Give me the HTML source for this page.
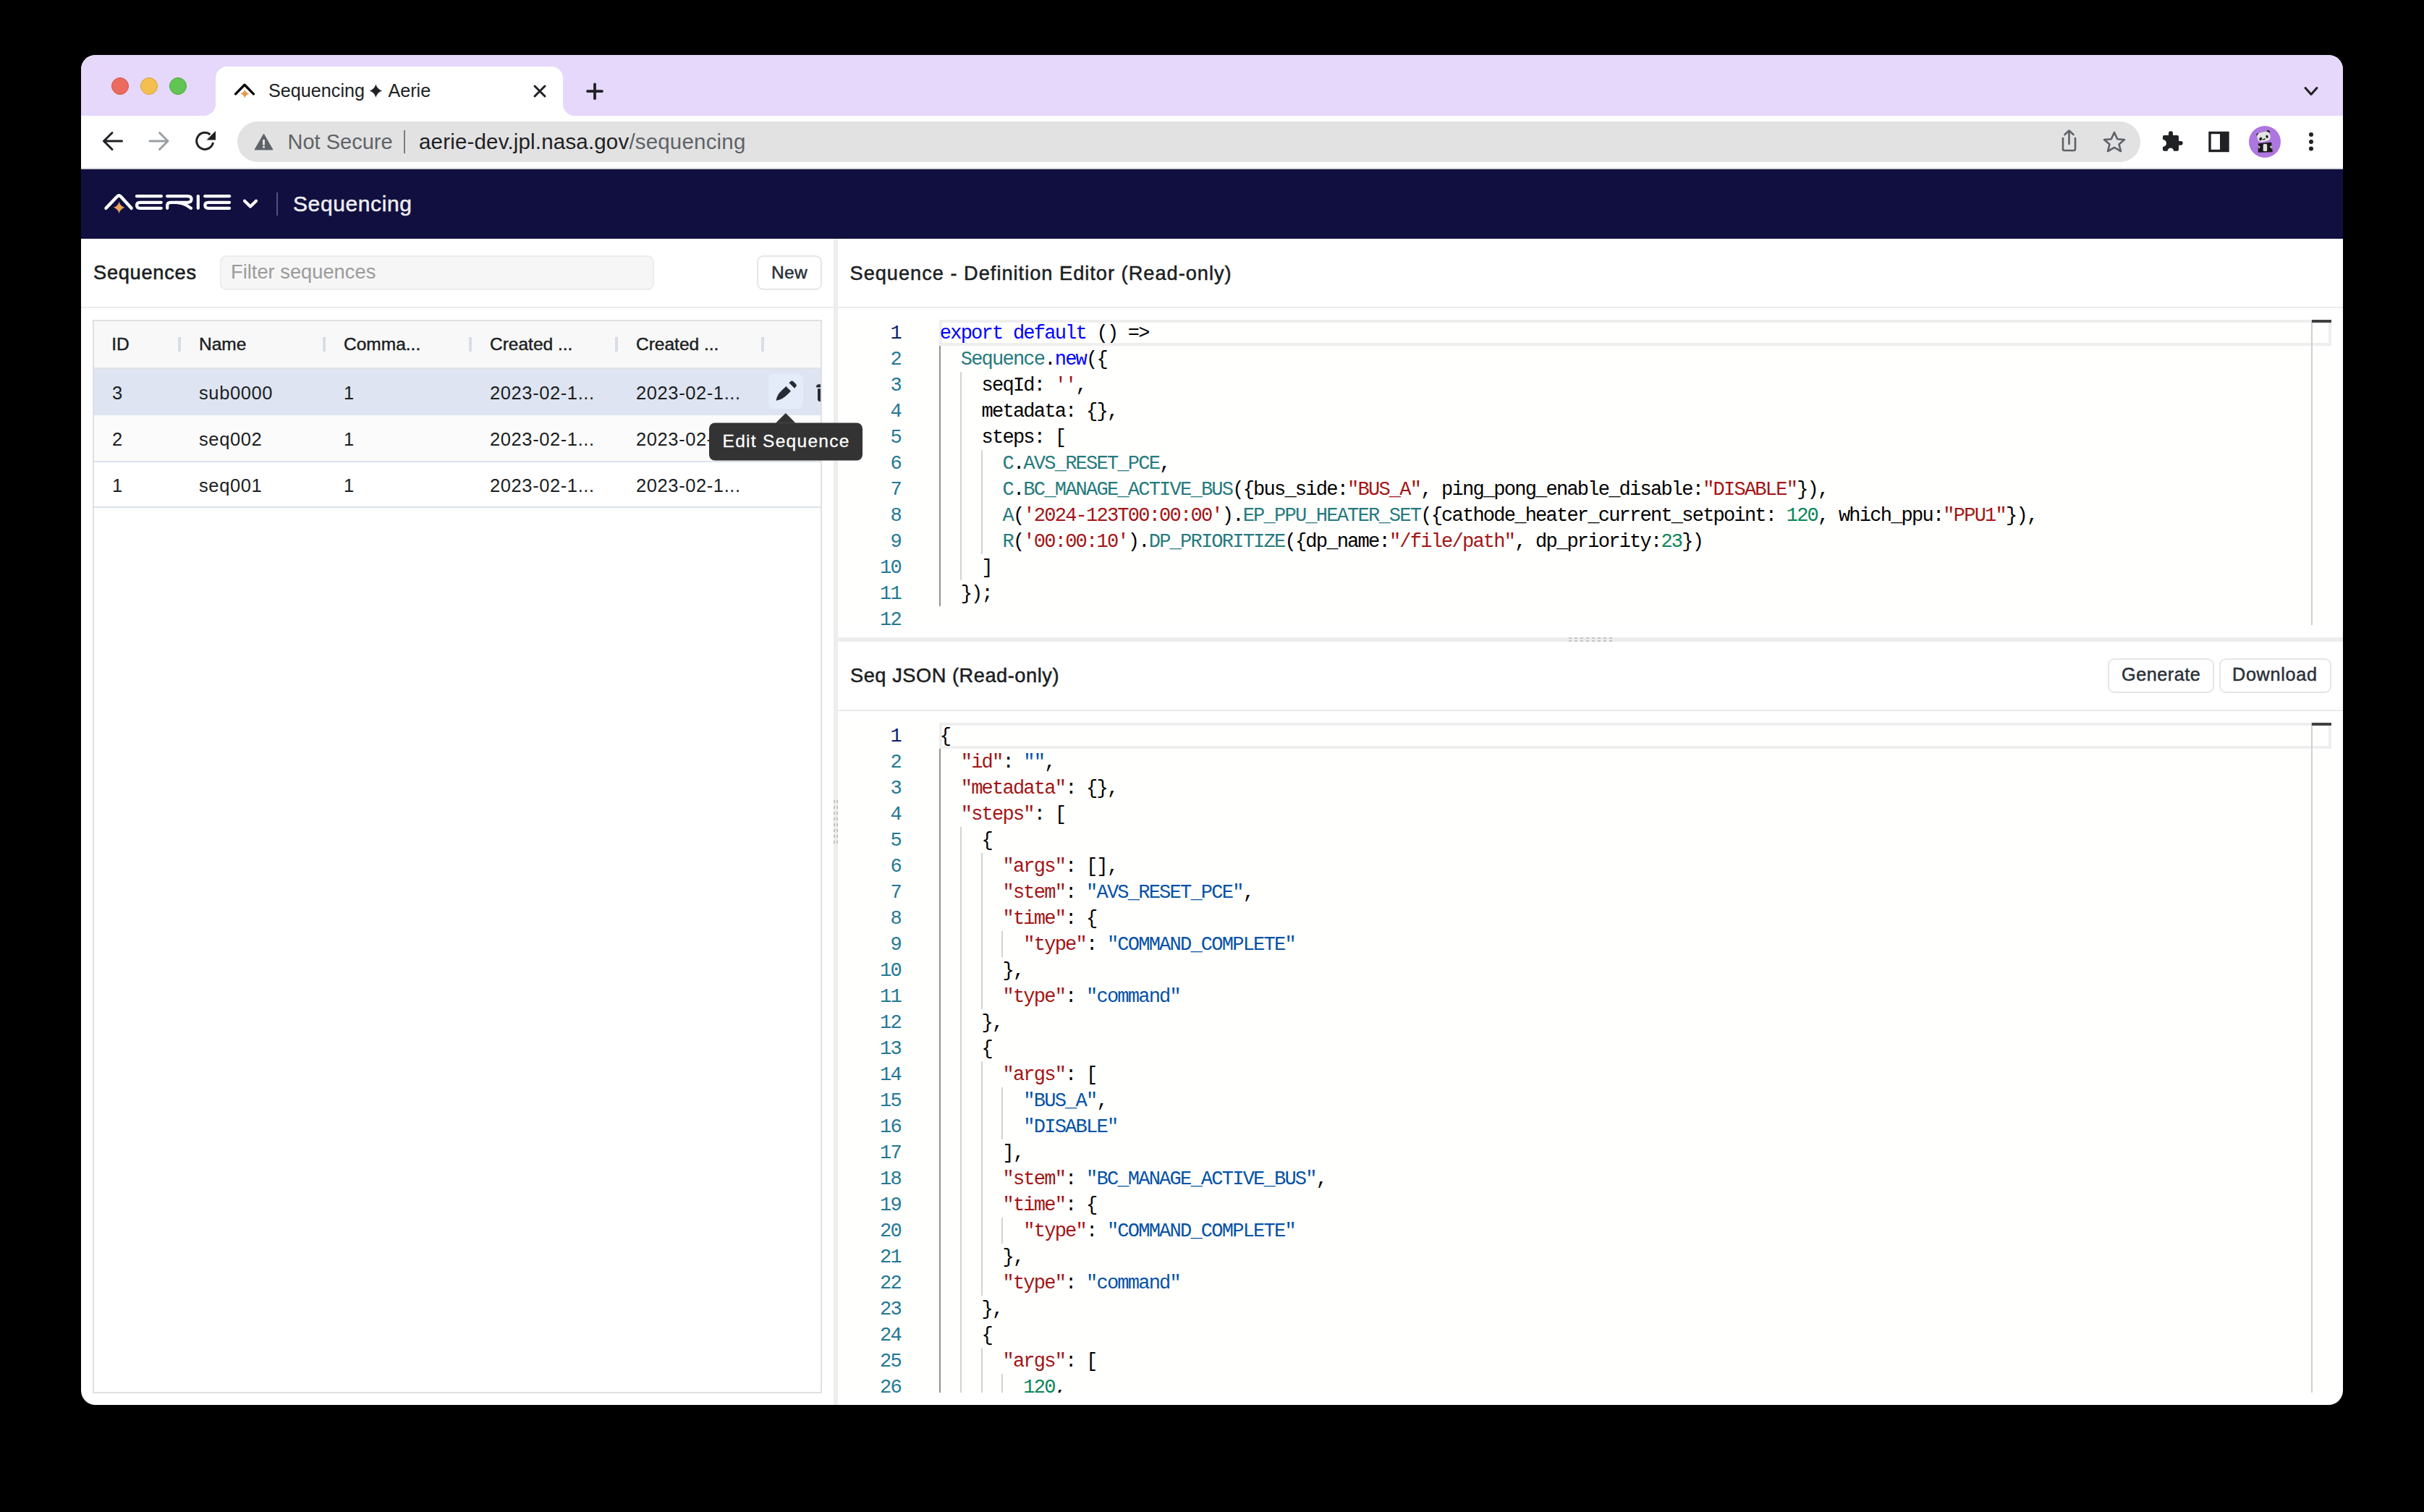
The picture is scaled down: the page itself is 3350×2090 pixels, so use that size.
<!DOCTYPE html>
<html><head><meta charset="utf-8">
<style>
*{box-sizing:border-box;margin:0;padding:0}
html,body{width:3350px;height:2090px;background:#000;overflow:hidden}
body{position:relative;font-family:"Liberation Sans",sans-serif}
.a{position:absolute}
.t{position:absolute;white-space:pre;line-height:1}
.tl{position:absolute;width:24px;height:24px;border-radius:50%}
.cl{position:absolute;white-space:pre;font-family:"Liberation Mono",monospace;font-size:27px;letter-spacing:-1.76px;line-height:36px;height:36px;color:#000}
.ln{position:absolute;white-space:pre;font-family:"Liberation Mono",monospace;font-size:27px;letter-spacing:-1.76px;line-height:36px;height:36px;color:#237893;text-align:right}
.k{color:#0000FF}.ty{color:#267A7C}.s{color:#A31515}.n{color:#098658}.v{color:#0451A5}
</style></head><body>
<div class="a" style="left:112px;top:76px;width:3126px;height:1866px;border-radius:20px;overflow:hidden;background:#fff"><div class="a" style="left:0;top:0;width:3126px;height:84px;background:#E5D8FA"></div></div>
<div class="tl" style="left:154px;top:107px;background:#EC6A5E;border:1px solid #D0574B"></div>
<div class="tl" style="left:194px;top:107px;background:#F4BF4F;border:1px solid #D6A33E"></div>
<div class="tl" style="left:234px;top:107px;background:#61C554;border:1px solid #4EA73F"></div>
<svg class="a" style="left:0;top:0" width="3350" height="240">
<path d="M282,160 A16,16 0 0 0 298,144 L298,108 A16,16 0 0 1 314,92 L762,92 A16,16 0 0 1 778,108 L778,144 A16,16 0 0 0 794,160 Z" fill="#fff"/>
<!-- favicon -->
<path d="M325.6,129.9 L338,117.2 L350.4,129.9" fill="none" stroke="#000" stroke-width="3.4" stroke-linecap="round" stroke-linejoin="round"/>
<path d="M338.3,123.5 Q339.7,128.1 344.3,129.5 Q339.7,130.9 338.3,135.5 Q336.90000000000003,130.9 332.3,129.5 Q336.90000000000003,128.1 338.3,123.5 Z" fill="#E39A50"/>
<!-- tab star glyph -->
<path d="M519.4,116.8 Q521.6,123.39999999999999 528.1,125.6 Q521.6,127.8 519.4,134.4 Q517.1999999999999,127.8 510.7,125.6 Q517.1999999999999,123.39999999999999 519.4,116.8 Z" fill="#202124"/>
<!-- close x -->
<path d="M739,119 L753,133 M753,119 L739,133" stroke="#202124" stroke-width="3" stroke-linecap="round"/>
<!-- plus -->
<path d="M822,116.4 L822,136.2 M812,126.1 L832,126.1" stroke="#202124" stroke-width="3.8" stroke-linecap="round"/>
<!-- tab strip chevron -->
<path d="M3186,121.5 L3194,130.5 L3202,121.5" fill="none" stroke="#202124" stroke-width="3" stroke-linecap="round" stroke-linejoin="round"/>
<!-- toolbar -->
<rect x="112" y="160" width="3126" height="72" fill="#fff"/>
<rect x="112" y="232" width="3126" height="2" fill="#D5D5D5"/>
<rect x="328" y="168" width="2630" height="56" rx="28" fill="#E2E2E2"/>
<!-- back arrow -->
<path d="M143.5,195 L168.5,195 M155,183.5 L143.5,195 L155,206.5" fill="none" stroke="#202124" stroke-width="3" stroke-linecap="round" stroke-linejoin="round"/>
<!-- forward arrow -->
<path d="M232,195 L207,195 M220.5,183.5 L232,195 L220.5,206.5" fill="none" stroke="#9AA0A6" stroke-width="3" stroke-linecap="round" stroke-linejoin="round"/>
<!-- reload -->
<path d="M294.5,197 A11.5,11.5 0 1 1 290.5,186" fill="none" stroke="#202124" stroke-width="3"/>
<path d="M298,181 L298,193.5 L285.5,193.5 Z" fill="#202124"/>
<!-- warning triangle -->
<path d="M364.5,185.2 L377,206.9 L352,206.9 Z" fill="#5F6368" stroke="#5F6368" stroke-width="1" stroke-linejoin="round"/>
<rect x="363" y="193" width="3" height="7.5" fill="#E2E2E2"/>
<rect x="363" y="201.8" width="3" height="2.6" fill="#E2E2E2"/>
<!-- separator -->
<rect x="558" y="180" width="2" height="32" fill="#7A7D82"/>
<!-- share icon -->
<path d="M2851,190 L2851,206 Q2851,208 2853,208 L2866,208 Q2868,208 2868,206 L2868,190" fill="none" stroke="#5F6368" stroke-width="2.6" stroke-linejoin="round"/>
<path d="M2859.5,199 L2859.5,180.5 M2853.5,186 L2859.5,180.5 L2865.5,186" fill="none" stroke="#5F6368" stroke-width="2.6" stroke-linecap="round" stroke-linejoin="round"/>
<!-- star icon -->
<path d="M2922,183 L2926.2,192.2 L2936,193.1 L2928.5,199.4 L2931,209 L2922,203.8 L2913,209 L2915.5,199.4 L2908,193.1 L2917.8,192.2 Z" fill="none" stroke="#5F6368" stroke-width="2.6" stroke-linejoin="round"/>
<!-- puzzle -->
<path d="M2991,187 L2997,187 L2997,184.2 A3,3 0 0 1 3003,184.2 L3003,187 L3009,187 A2,2 0 0 1 3011,189 L3011,195 L3013.8,195 A2.85,2.85 0 0 1 3013.8,200.7 L3011,200.7 L3011,206.8 A2,2 0 0 1 3009,208.8 L3004,208.8 A4.2,4.2 0 0 0 2995.6,208.8 L2991,208.8 A2,2 0 0 1 2989,206.8 L2989,203 A5,5 0 0 0 2989,193 L2989,189 A2,2 0 0 1 2991,187 Z" fill="#202124"/>
<!-- sidebar icon -->
<rect x="3054" y="183.5" width="25" height="25" fill="none" stroke="#202124" stroke-width="3.4"/>
<rect x="3068" y="183.5" width="11" height="25" fill="#202124"/>
<!-- avatar -->
<circle cx="3130" cy="196" r="22" fill="#AD77E0"/>
<circle cx="3120.8" cy="186.2" r="2.3" fill="#151515"/>
<circle cx="3134.6" cy="182.4" r="2.3" fill="#151515"/>
<path d="M3121.5,199 L3138.5,197.5 L3140,209.5 L3121.5,210 Z" fill="#1A1A1A" stroke="#1A1A1A" stroke-width="1.5" stroke-linejoin="round"/>
<rect x="3127.7" y="199" width="5.5" height="10" rx="1.5" fill="#E0E0E0"/>
<path d="M3120.5,200.5 L3123.5,203 L3122,206 Z" fill="#D8D8D8"/>
<path d="M3139.5,200.5 L3136.8,203 L3139.8,206 Z" fill="#D8D8D8"/>
<g transform="rotate(-12 3128.5 189)"><rect x="3119.5" y="182.5" width="18" height="13" rx="5" fill="#E2E2E2"/></g>
<ellipse cx="3124.2" cy="192" rx="1.8" ry="2.4" fill="#151515" transform="rotate(25 3124.2 192)"/>
<ellipse cx="3133" cy="188.8" rx="1.6" ry="2.1" fill="#151515" transform="rotate(-25 3133 188.8)"/>
<path d="M3126.5,192.5 Q3128.5,193.5 3130.5,191.5" fill="none" stroke="#151515" stroke-width="1.2"/>
<!-- kebab -->
<circle cx="3194" cy="186" r="3" fill="#202124"/>
<circle cx="3194" cy="196" r="3" fill="#202124"/>
<circle cx="3194" cy="205.5" r="3" fill="#202124"/>
</svg>
<div class="t" style="left:371px;top:112.77px;font-size:25.2px;color:#202124;">Sequencing</div>
<div class="t" style="left:536.4px;top:112.77px;font-size:25.2px;color:#202124;">Aerie</div>
<div class="t" style="left:397.5px;top:181.55px;font-size:29px;color:#5F6368;">Not Secure</div>
<div class="t" style="left:579px;top:181.13px;font-size:29.5px;color:#202124;letter-spacing:0.18px;">aerie-dev.jpl.nasa.gov<span style="color:#5F6368">/sequencing</span></div>
<div class="a" style="left:112px;top:234px;width:3126px;height:96px;background:#110F3F"></div>
<svg class="a" style="left:0;top:0" width="600" height="340">
<path d="M146.5,287.8 L162,271.5 Q164.4,269.3 166.8,271.5 L181.6,287.8" fill="none" stroke="#fff" stroke-width="4.4" stroke-linecap="round" stroke-linejoin="round"/>
<path d="M164.6,278.7 Q166.29999999999998,285.1 172.5,286.8 Q166.29999999999998,288.5 164.6,294.90000000000003 Q162.9,288.5 156.7,286.8 Q162.9,285.1 164.6,278.7 Z" fill="#E9A25A"/>
<g fill="none" stroke="#fff" stroke-width="4.2" stroke-linecap="round" stroke-linejoin="round">
<path d="M189,271.2 L222.8,271.2"/>
<path d="M222.8,279.8 L193.5,279.8 Q189,279.8 189,283.8 Q189,287.8 193.5,287.8 L222.8,287.8"/>
<path d="M231.2,271.2 L259,271.2 Q264.5,271.2 264.5,275.5 Q264.5,279.8 259,279.8 L236,279.8 Q231.2,279.8 231.2,284 L231.2,287.8"/>
<path d="M244,279.8 Q255,280.5 264,287.8"/>
<path d="M273.8,271.2 L273.8,287.8"/>
<path d="M283.3,271.2 L317.1,271.2"/>
<path d="M317.1,279.8 L287.8,279.8 Q283.3,279.8 283.3,283.8 Q283.3,287.8 287.8,287.8 L317.1,287.8"/>
<path d="M338,277.8 L346,285.6 L354,277.8"/>
</g>
<rect x="382" y="266" width="2" height="32" fill="#51507A"/>
</svg>
<div class="t" style="left:405px;top:266.60px;font-size:30px;color:#EEEEF2;letter-spacing:0.6px;-webkit-text-stroke:0.5px #EEEEF2;">Sequencing</div>
<div class="a" style="left:112px;top:424px;width:1040px;height:2px;background:#EBEBEB"></div>
<div class="t" style="left:129px;top:363.47px;font-size:27.2px;color:#1B1E22;letter-spacing:0.75px;-webkit-text-stroke:0.6px #1B1E22;">Sequences</div>
<div class="a" style="left:304px;top:353px;width:600px;height:48px;background:#F6F6F6;border:2px solid #ECECEC;border-radius:9px"></div>
<div class="t" style="left:319px;top:362.09px;font-size:27.3px;color:#9B9B9B;">Filter sequences</div>
<div class="a" style="left:1046px;top:353px;width:90px;height:48px;background:#fff;border:2px solid #E4E6E8;border-radius:9px"></div>
<div class="t" style="left:1066px;top:364.56px;font-size:24.5px;color:#2B3139;letter-spacing:0.4px;-webkit-text-stroke:0.5px #2B3139;">New</div>
<div class="a" style="left:128px;top:442px;width:1008px;height:1484px;border:2px solid #E0E0E0;background:#fff"></div>
<div class="a" style="left:130px;top:444px;width:1004px;height:64px;background:#F8F8F8"></div>
<div class="a" style="left:130px;top:508px;width:1004px;height:2px;background:#E2E2E2"></div>
<div class="a" style="left:130px;top:510px;width:1004px;height:63.5px;background:#DEE4F1"></div>
<div class="a" style="left:130px;top:573.5px;width:1004px;height:63px;background:#FBFBFB"></div>
<div class="a" style="left:130px;top:636.5px;width:1004px;height:2px;background:#DCE2EC"></div>
<div class="a" style="left:130px;top:700px;width:1004px;height:2px;background:#DCE2EC"></div>
<div class="a" style="left:246px;top:466px;width:4px;height:20px;background:#D8DDE8"></div>
<div class="a" style="left:446px;top:466px;width:4px;height:20px;background:#D8DDE8"></div>
<div class="a" style="left:648px;top:466px;width:4px;height:20px;background:#D8DDE8"></div>
<div class="a" style="left:850px;top:466px;width:4px;height:20px;background:#D8DDE8"></div>
<div class="a" style="left:1052px;top:466px;width:4px;height:20px;background:#D8DDE8"></div>
<div class="t" style="left:154.3px;top:463.96px;font-size:24.5px;color:#1B1E22;-webkit-text-stroke:0.45px #1B1E22;">ID</div>
<div class="t" style="left:275px;top:463.96px;font-size:24.5px;color:#1B1E22;-webkit-text-stroke:0.45px #1B1E22;">Name</div>
<div class="t" style="left:475px;top:463.96px;font-size:24.5px;color:#1B1E22;-webkit-text-stroke:0.45px #1B1E22;">Comma...</div>
<div class="t" style="left:677px;top:463.96px;font-size:24.5px;color:#1B1E22;-webkit-text-stroke:0.45px #1B1E22;">Created ...</div>
<div class="t" style="left:879px;top:463.96px;font-size:24.5px;color:#1B1E22;-webkit-text-stroke:0.45px #1B1E22;">Created ...</div>
<div class="t" style="left:155px;top:530.61px;font-size:25.5px;color:#1B1E22;letter-spacing:0.6px;">3</div>
<div class="t" style="left:275px;top:530.61px;font-size:25.5px;color:#1B1E22;letter-spacing:0.6px;">sub0000</div>
<div class="t" style="left:475px;top:530.61px;font-size:25.5px;color:#1B1E22;">1</div>
<div class="t" style="left:677px;top:530.61px;font-size:25.5px;color:#1B1E22;letter-spacing:0.6px;">2023-02-1...</div>
<div class="t" style="left:879px;top:530.61px;font-size:25.5px;color:#1B1E22;letter-spacing:0.6px;">2023-02-1...</div>
<div class="t" style="left:155px;top:594.61px;font-size:25.5px;color:#1B1E22;letter-spacing:0.6px;">2</div>
<div class="t" style="left:275px;top:594.61px;font-size:25.5px;color:#1B1E22;letter-spacing:0.6px;">seq002</div>
<div class="t" style="left:475px;top:594.61px;font-size:25.5px;color:#1B1E22;">1</div>
<div class="t" style="left:677px;top:594.61px;font-size:25.5px;color:#1B1E22;letter-spacing:0.6px;">2023-02-1...</div>
<div class="t" style="left:879px;top:594.61px;font-size:25.5px;color:#1B1E22;letter-spacing:0.6px;">2023-02-1...</div>
<div class="t" style="left:155px;top:658.61px;font-size:25.5px;color:#1B1E22;letter-spacing:0.6px;">1</div>
<div class="t" style="left:275px;top:658.61px;font-size:25.5px;color:#1B1E22;letter-spacing:0.6px;">seq001</div>
<div class="t" style="left:475px;top:658.61px;font-size:25.5px;color:#1B1E22;">1</div>
<div class="t" style="left:677px;top:658.61px;font-size:25.5px;color:#1B1E22;letter-spacing:0.6px;">2023-02-1...</div>
<div class="t" style="left:879px;top:658.61px;font-size:25.5px;color:#1B1E22;letter-spacing:0.6px;">2023-02-1...</div>
<div class="a" style="left:1062px;top:517px;width:48px;height:48px;background:#E3ECF8;border-radius:7px"></div>
<svg class="a" style="left:0;top:0" width="1200" height="660">
<path d="M1073.2,553.3 Q1074.5,545.5 1080,540.5 L1086.3,534.5 L1092.5,540.7 L1086.5,546.5 Q1081,551.8 1073.2,553.3 Z" fill="#272B33" stroke="#272B33" stroke-width="1" stroke-linejoin="round"/>
<path d="M1092.4,527.8 Q1094.2,526 1096.2,527.6 L1099.6,531 Q1101.2,533 1099.4,534.8 L1098,536.2 L1091,529.2 Z" fill="#272B33" stroke="#272B33" stroke-width="1" stroke-linejoin="round"/>
<path d="M1128,533.8 Q1128.5,531.6 1131,531.2 L1134,531.2 L1134,535.5 L1129,535.5 Q1127.8,535.3 1128,533.8 Z" fill="#272B33"/>
<path d="M1130,537.2 L1134,537.2 L1134,555 L1132.5,555 Q1130,554.7 1130,552 Z" fill="#272B33"/>
</svg>
<div class="a" style="left:1152px;top:330px;width:6px;height:1612px;background:#EDEDED"></div>
<div class="a" style="left:1152px;top:1106px;width:2px;height:4px;background:#C4C4C4"></div>
<div class="a" style="left:1156px;top:1106px;width:2px;height:4px;background:#C4C4C4"></div>
<div class="a" style="left:1152px;top:1114px;width:2px;height:4px;background:#C4C4C4"></div>
<div class="a" style="left:1156px;top:1114px;width:2px;height:4px;background:#C4C4C4"></div>
<div class="a" style="left:1152px;top:1122px;width:2px;height:4px;background:#C4C4C4"></div>
<div class="a" style="left:1156px;top:1122px;width:2px;height:4px;background:#C4C4C4"></div>
<div class="a" style="left:1152px;top:1130px;width:2px;height:4px;background:#C4C4C4"></div>
<div class="a" style="left:1156px;top:1130px;width:2px;height:4px;background:#C4C4C4"></div>
<div class="a" style="left:1152px;top:1138px;width:2px;height:4px;background:#C4C4C4"></div>
<div class="a" style="left:1156px;top:1138px;width:2px;height:4px;background:#C4C4C4"></div>
<div class="a" style="left:1152px;top:1146px;width:2px;height:4px;background:#C4C4C4"></div>
<div class="a" style="left:1156px;top:1146px;width:2px;height:4px;background:#C4C4C4"></div>
<div class="a" style="left:1152px;top:1154px;width:2px;height:4px;background:#C4C4C4"></div>
<div class="a" style="left:1156px;top:1154px;width:2px;height:4px;background:#C4C4C4"></div>
<div class="a" style="left:1152px;top:1162px;width:2px;height:4px;background:#C4C4C4"></div>
<div class="a" style="left:1156px;top:1162px;width:2px;height:4px;background:#C4C4C4"></div>
<div class="a" style="left:1158px;top:881px;width:2080px;height:6px;background:#EDEDED"></div>
<div class="a" style="left:2168px;top:881px;width:4px;height:2px;background:#C4C4C4"></div>
<div class="a" style="left:2168px;top:885px;width:4px;height:2px;background:#C4C4C4"></div>
<div class="a" style="left:2176px;top:881px;width:4px;height:2px;background:#C4C4C4"></div>
<div class="a" style="left:2176px;top:885px;width:4px;height:2px;background:#C4C4C4"></div>
<div class="a" style="left:2184px;top:881px;width:4px;height:2px;background:#C4C4C4"></div>
<div class="a" style="left:2184px;top:885px;width:4px;height:2px;background:#C4C4C4"></div>
<div class="a" style="left:2192px;top:881px;width:4px;height:2px;background:#C4C4C4"></div>
<div class="a" style="left:2192px;top:885px;width:4px;height:2px;background:#C4C4C4"></div>
<div class="a" style="left:2200px;top:881px;width:4px;height:2px;background:#C4C4C4"></div>
<div class="a" style="left:2200px;top:885px;width:4px;height:2px;background:#C4C4C4"></div>
<div class="a" style="left:2208px;top:881px;width:4px;height:2px;background:#C4C4C4"></div>
<div class="a" style="left:2208px;top:885px;width:4px;height:2px;background:#C4C4C4"></div>
<div class="a" style="left:2216px;top:881px;width:4px;height:2px;background:#C4C4C4"></div>
<div class="a" style="left:2216px;top:885px;width:4px;height:2px;background:#C4C4C4"></div>
<div class="a" style="left:2224px;top:881px;width:4px;height:2px;background:#C4C4C4"></div>
<div class="a" style="left:2224px;top:885px;width:4px;height:2px;background:#C4C4C4"></div>
<div class="a" style="left:1158px;top:424px;width:2080px;height:2px;background:#EBEBEB"></div>
<div class="t" style="left:1174.5px;top:363.77px;font-size:27.2px;color:#1B1E22;letter-spacing:1.0px;-webkit-text-stroke:0.5px #1B1E22;">Sequence - Definition Editor (Read-only)</div>
<div class="a" style="left:1158px;top:981px;width:2080px;height:2px;background:#EBEBEB"></div>
<div class="t" style="left:1175px;top:920.47px;font-size:27.2px;color:#1B1E22;letter-spacing:0.55px;-webkit-text-stroke:0.5px #1B1E22;">Seq JSON (Read-only)</div>
<div class="a" style="left:2913px;top:910px;width:147px;height:48px;background:#fff;border:2px solid #E4E6E8;border-radius:9px"></div>
<div class="a" style="left:3067px;top:910px;width:155px;height:48px;background:#fff;border:2px solid #E4E6E8;border-radius:9px"></div>
<div class="t" style="left:2932px;top:920.37px;font-size:25.2px;color:#2B3139;letter-spacing:0.55px;-webkit-text-stroke:0.5px #2B3139;">Generate</div>
<div class="t" style="left:3085px;top:920.37px;font-size:25.2px;color:#2B3139;letter-spacing:0.7px;-webkit-text-stroke:0.5px #2B3139;">Download</div>
<div class="a" style="left:1158px;top:438px;width:2064px;height:426px;background:#FFFFFE;overflow:hidden">
<div class="a" style="left:140px;top:4px;width:1924px;height:36px;border:4px solid #EEEEEE"></div>
<div class="a" style="left:2036px;top:4px;width:1.5px;height:422px;background:#D0D0D0"></div>
<div class="a" style="left:2037px;top:4px;width:27px;height:4px;background:#404040"></div>
<div class="a" style="left:140.0px;top:40px;width:2px;height:360px;background:#939393"></div>
<div class="a" style="left:168.8px;top:76px;width:2px;height:288px;background:#D3D3D3"></div>
<div class="a" style="left:197.6px;top:184px;width:2px;height:144px;background:#D3D3D3"></div>
<div class="ln" style="left:-113px;top:5px;width:200px;color:#0B216F">1</div>
<div class="cl" style="left:140.79999999999995px;top:5px"><span class="k">export</span> <span class="k">default</span> () =&gt;</div>
<div class="ln" style="left:-113px;top:41px;width:200px;color:#237893">2</div>
<div class="cl" style="left:140.79999999999995px;top:41px">  <span class="ty">Sequence</span>.<span class="k">new</span>({</div>
<div class="ln" style="left:-113px;top:77px;width:200px;color:#237893">3</div>
<div class="cl" style="left:140.79999999999995px;top:77px">    seqId: <span class="s">''</span>,</div>
<div class="ln" style="left:-113px;top:113px;width:200px;color:#237893">4</div>
<div class="cl" style="left:140.79999999999995px;top:113px">    metadata: {},</div>
<div class="ln" style="left:-113px;top:149px;width:200px;color:#237893">5</div>
<div class="cl" style="left:140.79999999999995px;top:149px">    steps: [</div>
<div class="ln" style="left:-113px;top:185px;width:200px;color:#237893">6</div>
<div class="cl" style="left:140.79999999999995px;top:185px">      <span class="ty">C</span>.<span class="ty">AVS_RESET_PCE</span>,</div>
<div class="ln" style="left:-113px;top:221px;width:200px;color:#237893">7</div>
<div class="cl" style="left:140.79999999999995px;top:221px">      <span class="ty">C</span>.<span class="ty">BC_MANAGE_ACTIVE_BUS</span>({bus_side:<span class="s">"BUS_A"</span>, ping_pong_enable_disable:<span class="s">"DISABLE"</span>}),</div>
<div class="ln" style="left:-113px;top:257px;width:200px;color:#237893">8</div>
<div class="cl" style="left:140.79999999999995px;top:257px">      <span class="ty">A</span>(<span class="s">'2024-123T00:00:00'</span>).<span class="ty">EP_PPU_HEATER_SET</span>({cathode_heater_current_setpoint: <span class="n">120</span>, which_ppu:<span class="s">"PPU1"</span>}),</div>
<div class="ln" style="left:-113px;top:293px;width:200px;color:#237893">9</div>
<div class="cl" style="left:140.79999999999995px;top:293px">      <span class="ty">R</span>(<span class="s">'00:00:10'</span>).<span class="ty">DP_PRIORITIZE</span>({dp_name:<span class="s">"/file/path"</span>, dp_priority:<span class="n">23</span>})</div>
<div class="ln" style="left:-113px;top:329px;width:200px;color:#237893">10</div>
<div class="cl" style="left:140.79999999999995px;top:329px">    ]</div>
<div class="ln" style="left:-113px;top:365px;width:200px;color:#237893">11</div>
<div class="cl" style="left:140.79999999999995px;top:365px">  });</div>
<div class="ln" style="left:-113px;top:401px;width:200px;color:#237893">12</div>
<div class="cl" style="left:140.79999999999995px;top:401px"></div>
</div>
<div class="a" style="left:1158px;top:995px;width:2064px;height:930px;background:#FFFFFE;overflow:hidden">
<div class="a" style="left:140px;top:4px;width:1924px;height:36px;border:4px solid #EEEEEE"></div>
<div class="a" style="left:2036px;top:4px;width:1.5px;height:926px;background:#D0D0D0"></div>
<div class="a" style="left:2037px;top:4px;width:27px;height:4px;background:#404040"></div>
<div class="a" style="left:140.0px;top:40px;width:2px;height:900px;background:#939393"></div>
<div class="a" style="left:168.8px;top:148px;width:2px;height:792px;background:#D3D3D3"></div>
<div class="a" style="left:197.6px;top:184px;width:2px;height:216px;background:#D3D3D3"></div>
<div class="a" style="left:197.6px;top:472px;width:2px;height:324px;background:#D3D3D3"></div>
<div class="a" style="left:197.6px;top:868px;width:2px;height:72px;background:#D3D3D3"></div>
<div class="a" style="left:226.4px;top:292px;width:2px;height:36px;background:#D3D3D3"></div>
<div class="a" style="left:226.4px;top:508px;width:2px;height:72px;background:#D3D3D3"></div>
<div class="a" style="left:226.4px;top:688px;width:2px;height:36px;background:#D3D3D3"></div>
<div class="a" style="left:226.4px;top:904px;width:2px;height:36px;background:#D3D3D3"></div>
<div class="ln" style="left:-113px;top:5px;width:200px;color:#0B216F">1</div>
<div class="cl" style="left:140.79999999999995px;top:5px">{</div>
<div class="ln" style="left:-113px;top:41px;width:200px;color:#237893">2</div>
<div class="cl" style="left:140.79999999999995px;top:41px">  <span class="s">"id"</span>: <span class="v">""</span>,</div>
<div class="ln" style="left:-113px;top:77px;width:200px;color:#237893">3</div>
<div class="cl" style="left:140.79999999999995px;top:77px">  <span class="s">"metadata"</span>: {},</div>
<div class="ln" style="left:-113px;top:113px;width:200px;color:#237893">4</div>
<div class="cl" style="left:140.79999999999995px;top:113px">  <span class="s">"steps"</span>: [</div>
<div class="ln" style="left:-113px;top:149px;width:200px;color:#237893">5</div>
<div class="cl" style="left:140.79999999999995px;top:149px">    {</div>
<div class="ln" style="left:-113px;top:185px;width:200px;color:#237893">6</div>
<div class="cl" style="left:140.79999999999995px;top:185px">      <span class="s">"args"</span>: [],</div>
<div class="ln" style="left:-113px;top:221px;width:200px;color:#237893">7</div>
<div class="cl" style="left:140.79999999999995px;top:221px">      <span class="s">"stem"</span>: <span class="v">"AVS_RESET_PCE"</span>,</div>
<div class="ln" style="left:-113px;top:257px;width:200px;color:#237893">8</div>
<div class="cl" style="left:140.79999999999995px;top:257px">      <span class="s">"time"</span>: {</div>
<div class="ln" style="left:-113px;top:293px;width:200px;color:#237893">9</div>
<div class="cl" style="left:140.79999999999995px;top:293px">        <span class="s">"type"</span>: <span class="v">"COMMAND_COMPLETE"</span></div>
<div class="ln" style="left:-113px;top:329px;width:200px;color:#237893">10</div>
<div class="cl" style="left:140.79999999999995px;top:329px">      },</div>
<div class="ln" style="left:-113px;top:365px;width:200px;color:#237893">11</div>
<div class="cl" style="left:140.79999999999995px;top:365px">      <span class="s">"type"</span>: <span class="v">"command"</span></div>
<div class="ln" style="left:-113px;top:401px;width:200px;color:#237893">12</div>
<div class="cl" style="left:140.79999999999995px;top:401px">    },</div>
<div class="ln" style="left:-113px;top:437px;width:200px;color:#237893">13</div>
<div class="cl" style="left:140.79999999999995px;top:437px">    {</div>
<div class="ln" style="left:-113px;top:473px;width:200px;color:#237893">14</div>
<div class="cl" style="left:140.79999999999995px;top:473px">      <span class="s">"args"</span>: [</div>
<div class="ln" style="left:-113px;top:509px;width:200px;color:#237893">15</div>
<div class="cl" style="left:140.79999999999995px;top:509px">        <span class="v">"BUS_A"</span>,</div>
<div class="ln" style="left:-113px;top:545px;width:200px;color:#237893">16</div>
<div class="cl" style="left:140.79999999999995px;top:545px">        <span class="v">"DISABLE"</span></div>
<div class="ln" style="left:-113px;top:581px;width:200px;color:#237893">17</div>
<div class="cl" style="left:140.79999999999995px;top:581px">      ],</div>
<div class="ln" style="left:-113px;top:617px;width:200px;color:#237893">18</div>
<div class="cl" style="left:140.79999999999995px;top:617px">      <span class="s">"stem"</span>: <span class="v">"BC_MANAGE_ACTIVE_BUS"</span>,</div>
<div class="ln" style="left:-113px;top:653px;width:200px;color:#237893">19</div>
<div class="cl" style="left:140.79999999999995px;top:653px">      <span class="s">"time"</span>: {</div>
<div class="ln" style="left:-113px;top:689px;width:200px;color:#237893">20</div>
<div class="cl" style="left:140.79999999999995px;top:689px">        <span class="s">"type"</span>: <span class="v">"COMMAND_COMPLETE"</span></div>
<div class="ln" style="left:-113px;top:725px;width:200px;color:#237893">21</div>
<div class="cl" style="left:140.79999999999995px;top:725px">      },</div>
<div class="ln" style="left:-113px;top:761px;width:200px;color:#237893">22</div>
<div class="cl" style="left:140.79999999999995px;top:761px">      <span class="s">"type"</span>: <span class="v">"command"</span></div>
<div class="ln" style="left:-113px;top:797px;width:200px;color:#237893">23</div>
<div class="cl" style="left:140.79999999999995px;top:797px">    },</div>
<div class="ln" style="left:-113px;top:833px;width:200px;color:#237893">24</div>
<div class="cl" style="left:140.79999999999995px;top:833px">    {</div>
<div class="ln" style="left:-113px;top:869px;width:200px;color:#237893">25</div>
<div class="cl" style="left:140.79999999999995px;top:869px">      <span class="s">"args"</span>: [</div>
<div class="ln" style="left:-113px;top:905px;width:200px;color:#237893">26</div>
<div class="cl" style="left:140.79999999999995px;top:905px">        <span class="n">120</span>,</div>
</div>
<svg class="a" style="left:0;top:0" width="1200" height="660">
<path d="M1085.8,571 L1072,584.8 L1099.6,584.8 Z" fill="#333333"/>
<rect x="980" y="584.5" width="212" height="52" rx="8" fill="#333333"/>
</svg>
<div class="t" style="left:998.5px;top:597.76px;font-size:24.5px;color:#FFFFFF;letter-spacing:1.3px;-webkit-text-stroke:0.3px #fff;">Edit Sequence</div>
</body></html>
